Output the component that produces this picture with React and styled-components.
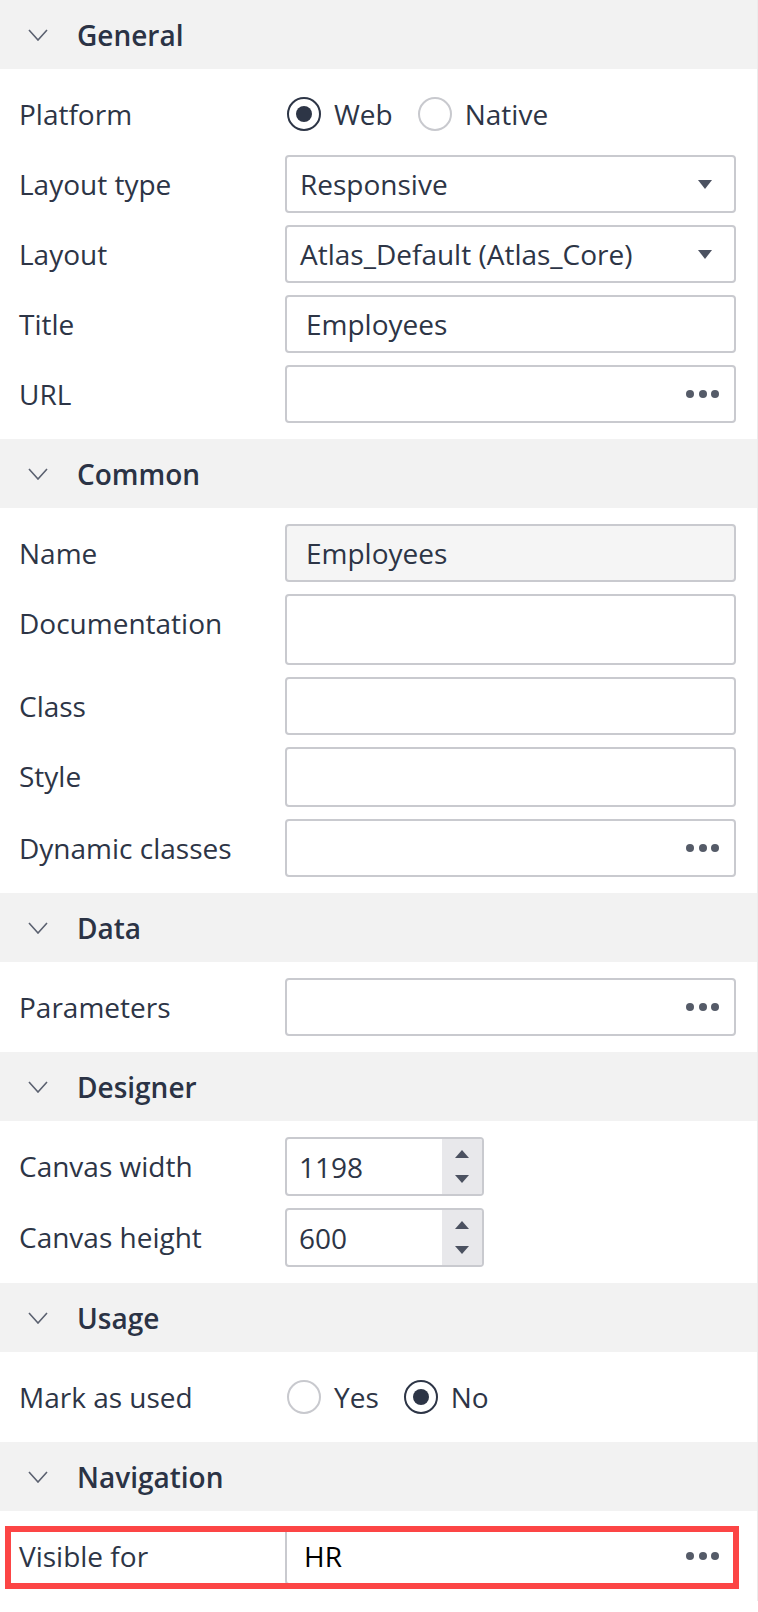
import React from 'react';
import styled, { createGlobalStyle } from 'styled-components';

const GlobalStyle = createGlobalStyle`
  body{
    margin:0;
    background:#fff;
    font-family:"Open Sans", "Noto Sans", sans-serif;
  }
`;

const Panel = styled.div`
  width:758px;
  box-sizing:border-box;
  border-right:1px solid #ececec;
  color:#2d3546;
  font-size:28px;
`;

const SectionHeader = styled.div`
  height:69px;
  display:flex;
  align-items:center;
  gap:29px;
  padding-left:28px;
  background:#f2f2f2;
  font-weight:600;
  color:#2b3345;
  svg{
    flex:none;
  }
`;

const SectionBody = styled.div`
  display:flex;
  flex-direction:column;
  gap:12px;
  padding:16px 21px 16px 19px;
`;

const Row = styled.div`
  position:relative;
  display:grid;
  grid-template-columns:266px 1fr;
  align-items:start;
  ${p => p.$highlight && `
    &::after{
      content:'';
      position:absolute;
      top:-1px;
      bottom:-4px;
      left:-14px;
      right:-3px;
      border:6px solid #fc4545;
      pointer-events:none;
    }
  `}
`;

const Label = styled.span`
  line-height:58px;
  white-space:nowrap;
`;

const Field = styled.div`
  box-sizing:border-box;
  height:${p => p.$h || 58}px;
  display:flex;
  align-items:center;
  justify-content:space-between;
  padding:0 22px 0 ${p => p.$pl || 19}px;
  border:2px solid #c9cacf;
  border-radius:4px;
  background:${p => (p.$disabled ? '#f5f5f5' : '#fff')};
  color:${p => p.$dark || '#2d3546'};
  font-weight:${p => (p.$dark ? 500 : 400)};
  overflow:hidden;
`;

const Caret = styled.span`
  width:0;
  height:0;
  border-left:7.5px solid transparent;
  border-right:7.5px solid transparent;
  border-top:9px solid #4b5160;
`;

const Dots = styled.span`
  display:flex;
  gap:4.5px;
  margin-right:-7px;
  span{
    width:8px;
    height:8px;
    border-radius:50%;
    background:#555b68;
  }
`;

const RadioGroup = styled.div`
  height:58px;
  display:flex;
  align-items:center;
  padding-left:2px;
`;

const RadioOption = styled.label`
  display:flex;
  align-items:center;
  gap:13px;
  margin-right:25px;
`;

const RadioCircle = styled.span`
  box-sizing:border-box;
  width:34px;
  height:34px;
  border-radius:50%;
  display:flex;
  align-items:center;
  justify-content:center;
  border:${p => (p.$checked ? '2.5px solid #2d3546' : '2px solid #c8c9ce')};
  &::after{
    content:'';
    width:16px;
    height:16px;
    border-radius:50%;
    background:${p => (p.$checked ? '#2d3546' : 'transparent')};
  }
`;

const Spinner = styled.div`
  box-sizing:border-box;
  width:199px;
  height:59px;
  display:flex;
  border:2px solid #c9cacf;
  border-radius:4px;
  overflow:hidden;
`;

const SpinValue = styled.span`
  flex:1;
  display:flex;
  align-items:center;
  padding-left:12px;
`;

const SpinButtons = styled.div`
  width:40px;
  display:flex;
  flex-direction:column;
  align-items:center;
  justify-content:center;
  gap:17px;
  background:#e8e8eb;
`;

const Tri = styled.span`
  width:0;
  height:0;
  border-left:7.5px solid transparent;
  border-right:7.5px solid transparent;
  ${p => (p.$up ? 'border-bottom:8px solid #4b5160;' : 'border-top:8px solid #4b5160;')}
`;

const Chevron = () => (
  <svg width="20" height="12" viewBox="0 0 20 12">
    <path d="M1 1 L10 11 L19 1" fill="none" stroke="#5b6170" strokeWidth="1.6" />
  </svg>
);

const Section = ({ title, children }) => (
  <>
    <SectionHeader>
      <Chevron />
      <span>{title}</span>
    </SectionHeader>
    <SectionBody>{children}</SectionBody>
  </>
);

const More = () => (
  <Dots>
    <span />
    <span />
    <span />
  </Dots>
);

const Radios = ({ options, value }) => (
  <RadioGroup>
    {options.map(o => (
      <RadioOption key={o}>
        <RadioCircle $checked={o === value} />
        {o}
      </RadioOption>
    ))}
  </RadioGroup>
);

const NumberBox = ({ value }) => (
  <Spinner>
    <SpinValue>{value}</SpinValue>
    <SpinButtons>
      <Tri $up />
      <Tri />
    </SpinButtons>
  </Spinner>
);

const App = () => {
  return (
    <Panel>
      <GlobalStyle />
      <Section title="General">
        <Row>
          <Label>Platform</Label>
          <Radios options={['Web', 'Native']} value="Web" />
        </Row>
        <Row>
          <Label>Layout type</Label>
          <Field $pl={13}>Responsive<Caret /></Field>
        </Row>
        <Row>
          <Label>Layout</Label>
          <Field $pl={13}>Atlas_Default (Atlas_Core)<Caret /></Field>
        </Row>
        <Row>
          <Label>Title</Label>
          <Field $pl={19}>Employees</Field>
        </Row>
        <Row>
          <Label>URL</Label>
          <Field><span /><More /></Field>
        </Row>
      </Section>

      <Section title="Common">
        <Row>
          <Label>Name</Label>
          <Field $disabled $pl={19}>Employees</Field>
        </Row>
        <Row>
          <Label>Documentation</Label>
          <Field $h={71} />
        </Row>
        <Row>
          <Label>Class</Label>
          <Field />
        </Row>
        <Row>
          <Label>Style</Label>
          <Field $h={60} />
        </Row>
        <Row>
          <Label>Dynamic classes</Label>
          <Field><span /><More /></Field>
        </Row>
      </Section>

      <Section title="Data">
        <Row>
          <Label>Parameters</Label>
          <Field><span /><More /></Field>
        </Row>
      </Section>

      <Section title="Designer">
        <Row>
          <Label>Canvas width</Label>
          <NumberBox value="1198" />
        </Row>
        <Row>
          <Label>Canvas height</Label>
          <NumberBox value="600" />
        </Row>
      </Section>

      <Section title="Usage">
        <Row>
          <Label>Mark as used</Label>
          <Radios options={['Yes', 'No']} value="No" />
        </Row>
      </Section>

      <Section title="Navigation">
        <Row $highlight>
          <Label>Visible for</Label>
          <Field $dark="#000" $pl={17}>HR<More /></Field>
        </Row>
      </Section>
    </Panel>
  );
};

export default App;
